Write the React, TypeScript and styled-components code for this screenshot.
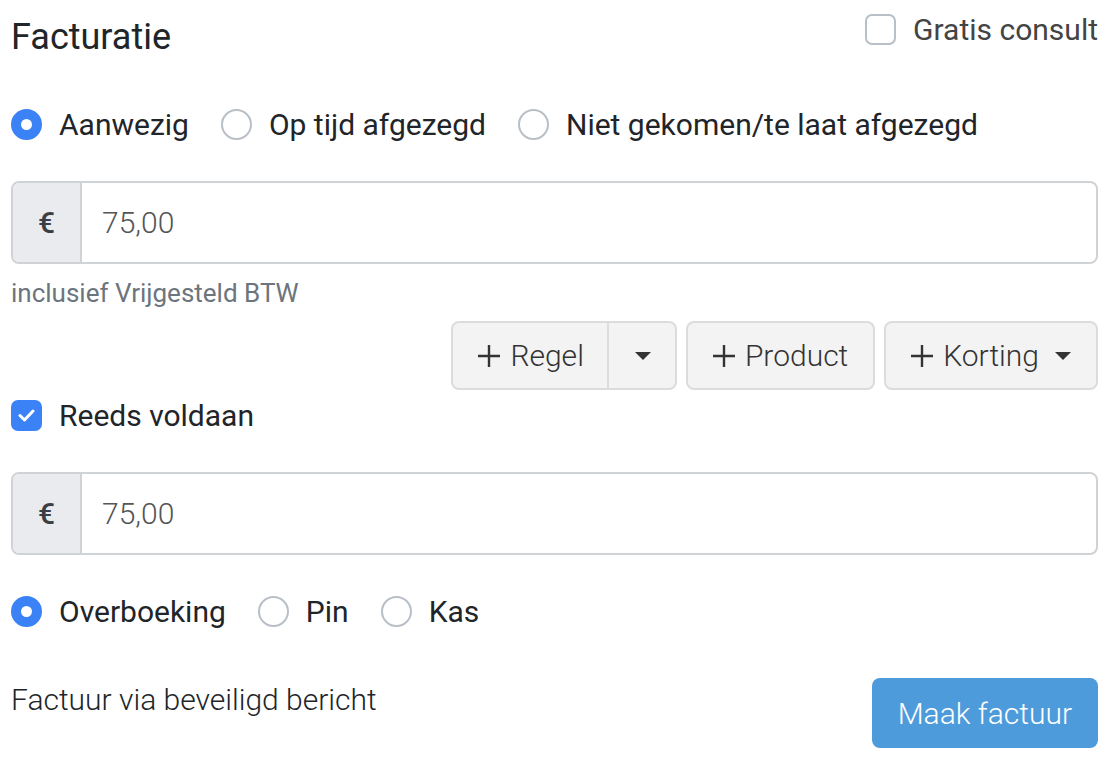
import React from 'react';
import styled, { createGlobalStyle } from 'styled-components';

const GlobalStyle = createGlobalStyle`
  html, body {
    margin: 0;
    padding: 0;
    background: #fff;
  }
  body {
    font-family: Roboto, "Liberation Sans", Arial, sans-serif;
    color: #212529;
  }
`;

const Page = styled.div`
  width: 1114px;
  box-sizing: border-box;
  padding: 0 16px 0 11px;
  display: flex;
  flex-direction: column;
`;

const Header = styled.div`
  display: flex;
  justify-content: space-between;
  align-items: flex-start;
  height: 105px;
`;

const Title = styled.h1`
  margin: 17px 0 0;
  font-size: 36px;
  line-height: 40px;
  font-weight: 400;
  color: #212529;
`;

const Check = styled.label<{ $muted?: boolean; $top?: number }>`
  display: flex;
  align-items: center;
  gap: 17px;
  margin-top: ${p => p.$top ?? 0}px;
  height: 40px;
  font-size: 30px;
  font-weight: 400;
  color: ${p => (p.$muted ? '#444' : '#212529')};
`;

const Box = styled.span<{ $on?: boolean }>`
  width: 31px;
  height: 31px;
  box-sizing: border-box;
  border-radius: 7px;
  border: 2px solid ${p => (p.$on ? '#3b82f6' : '#b9bfc7')};
  background: ${p => (p.$on ? '#3b82f6' : '#fff')};
  display: flex;
  align-items: center;
  justify-content: center;
  flex-shrink: 0;
`;

const RadioRow = styled.div<{ $gap: number; $top?: number }>`
  display: flex;
  align-items: center;
  gap: ${p => p.$gap}px;
  height: 40px;
  margin-top: ${p => p.$top ?? 0}px;
`;

const RadioItem = styled.label`
  display: flex;
  align-items: center;
  gap: 17px;
  font-size: 30px;
  color: #212529;
`;

const Dot = styled.span<{ $on?: boolean }>`
  width: 31px;
  height: 31px;
  box-sizing: border-box;
  border-radius: 50%;
  border: ${p => (p.$on ? '10px solid #3b82f6' : '2px solid #b9bfc7')};
  background: #fff;
  flex-shrink: 0;
`;

const InputGroup = styled.div<{ $top: number }>`
  display: flex;
  height: 83px;
  margin-top: ${p => p.$top}px;
  border: 2px solid #d0d3d6;
  border-radius: 8px;
  box-sizing: border-box;
  overflow: hidden;
`;

const Prepend = styled.span`
  width: 67px;
  display: flex;
  align-items: center;
  justify-content: center;
  background: #e9ebee;
  border-right: 2px solid #d0d3d6;
  font-size: 30px;
  font-weight: 500;
  color: #3b3f44;
`;

const Amount = styled.span`
  display: flex;
  align-items: center;
  padding-left: 20px;
  font-size: 30px;
  font-weight: 300;
  color: #555;
`;

const Help = styled.div`
  margin-top: 14px;
  font-size: 26px;
  line-height: 30px;
  color: #6c757d;
`;

const Toolbar = styled.div`
  display: flex;
  justify-content: flex-end;
  gap: 9px;
  margin-top: 13px;
`;

const BtnGroup = styled.div`
  display: flex;
  height: 69px;
  box-sizing: border-box;
  border: 2px solid #dcdcdc;
  border-radius: 8px;
  background: #f3f3f3;
  overflow: hidden;
`;

const Btn = styled.button<{ $pad?: string; $split?: boolean }>`
  display: flex;
  align-items: center;
  gap: 10px;
  padding: ${p => p.$pad ?? '0 25px'};
  border: 0;
  border-left: ${p => (p.$split ? '2px solid #dcdcdc' : '0')};
  background: transparent;
  font-family: inherit;
  font-size: 30px;
  font-weight: 300;
  color: #333;
`;

const Caret = styled.span`
  width: 0;
  height: 0;
  border-left: 8px solid transparent;
  border-right: 8px solid transparent;
  border-top: 8px solid #333;
  margin-left: 6px;
`;

const Footer = styled.div`
  display: flex;
  justify-content: space-between;
  align-items: flex-start;
  margin-top: 47px;
`;

const FooterText = styled.div`
  margin-top: 4px;
  font-size: 30px;
  line-height: 36px;
  font-weight: 300;
  color: #212529;
`;

const Primary = styled.button`
  height: 70px;
  padding: 0 26px;
  border: 0;
  border-radius: 8px;
  background: #4e9bdb;
  color: #fff;
  font-family: inherit;
  font-size: 30px;
  font-weight: 300;
`;

const Plus = () => (
  <svg width="22" height="22" viewBox="0 0 22 22">
    <path d="M11 0v22M0 11h22" stroke="#333" strokeWidth="2.4" />
  </svg>
);

const Tick = () => (
  <svg width="17" height="13" viewBox="0 0 17 13">
    <path d="M2 6.5l4.5 4.5L15 2" stroke="#fff" strokeWidth="3" fill="none" strokeLinecap="round" strokeLinejoin="round" />
  </svg>
);

export default function App() {
  return (
    <Page>
      <GlobalStyle />
      <Header>
        <Title>Facturatie</Title>
        <Check $muted $top={9}>
          <Box />
          Gratis consult
        </Check>
      </Header>

      <RadioRow $gap={32} $top={-1}>
        <RadioItem><Dot $on />Aanwezig</RadioItem>
        <RadioItem><Dot />Op tijd afgezegd</RadioItem>
        <RadioItem><Dot />Niet gekomen/te laat afgezegd</RadioItem>
      </RadioRow>

      <InputGroup $top={37}>
        <Prepend>€</Prepend>
        <Amount>75,00</Amount>
      </InputGroup>
      <Help>inclusief Vrijgesteld BTW</Help>

      <Toolbar>
        <BtnGroup>
          <Btn $pad="0 23px 0 25px"><Plus />Regel</Btn>
          <Btn $split $pad="0 24px 0 20px"><Caret /></Btn>
        </BtnGroup>
        <BtnGroup>
          <Btn><Plus />Product</Btn>
        </BtnGroup>
        <BtnGroup>
          <Btn><Plus />Korting<Caret /></Btn>
        </BtnGroup>
      </Toolbar>

      <Check $top={5}>
        <Box $on><Tick /></Box>
        Reeds voldaan
      </Check>

      <InputGroup $top={37}>
        <Prepend>€</Prepend>
        <Amount>75,00</Amount>
      </InputGroup>

      <RadioRow $gap={32} $top={36}>
        <RadioItem><Dot $on />Overboeking</RadioItem>
        <RadioItem><Dot />Pin</RadioItem>
        <RadioItem><Dot />Kas</RadioItem>
      </RadioRow>

      <Footer>
        <FooterText>Factuur via beveiligd bericht</FooterText>
        <Primary>Maak factuur</Primary>
      </Footer>
    </Page>
  );
}
